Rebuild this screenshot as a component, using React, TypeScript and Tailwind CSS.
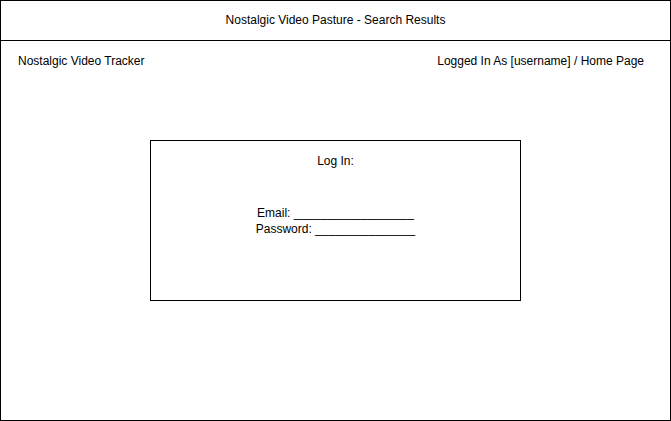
export default function App() {
  return (
    <div className="w-[671px] h-[421px] bg-white font-['Liberation_Sans',Arial,sans-serif] text-[12px] text-black">
      <div className="w-[671px] h-[421px] border border-black flex flex-col">
        <div className="h-[40px] border-b border-black flex items-center justify-center pb-[2px]">
          Nostalgic Video Pasture - Search Results
        </div>
        <div className="flex justify-between pl-[17px] pr-[26px] mt-[11px]">
          <span>Nostalgic Video Tracker</span>
          <span>Logged In As [username] / Home Page</span>
        </div>
        <div className="ml-[149px] mt-[70px] w-[371px] h-[161px] border border-black flex flex-col items-center">
          <div className="mt-[11px]">Log In:</div>
          <div className="mt-[35px] flex flex-col items-center leading-[16px]">
            <span>Email: __________________</span>
            <span>Password: _______________</span>
          </div>
        </div>
      </div>
    </div>
  );
}
